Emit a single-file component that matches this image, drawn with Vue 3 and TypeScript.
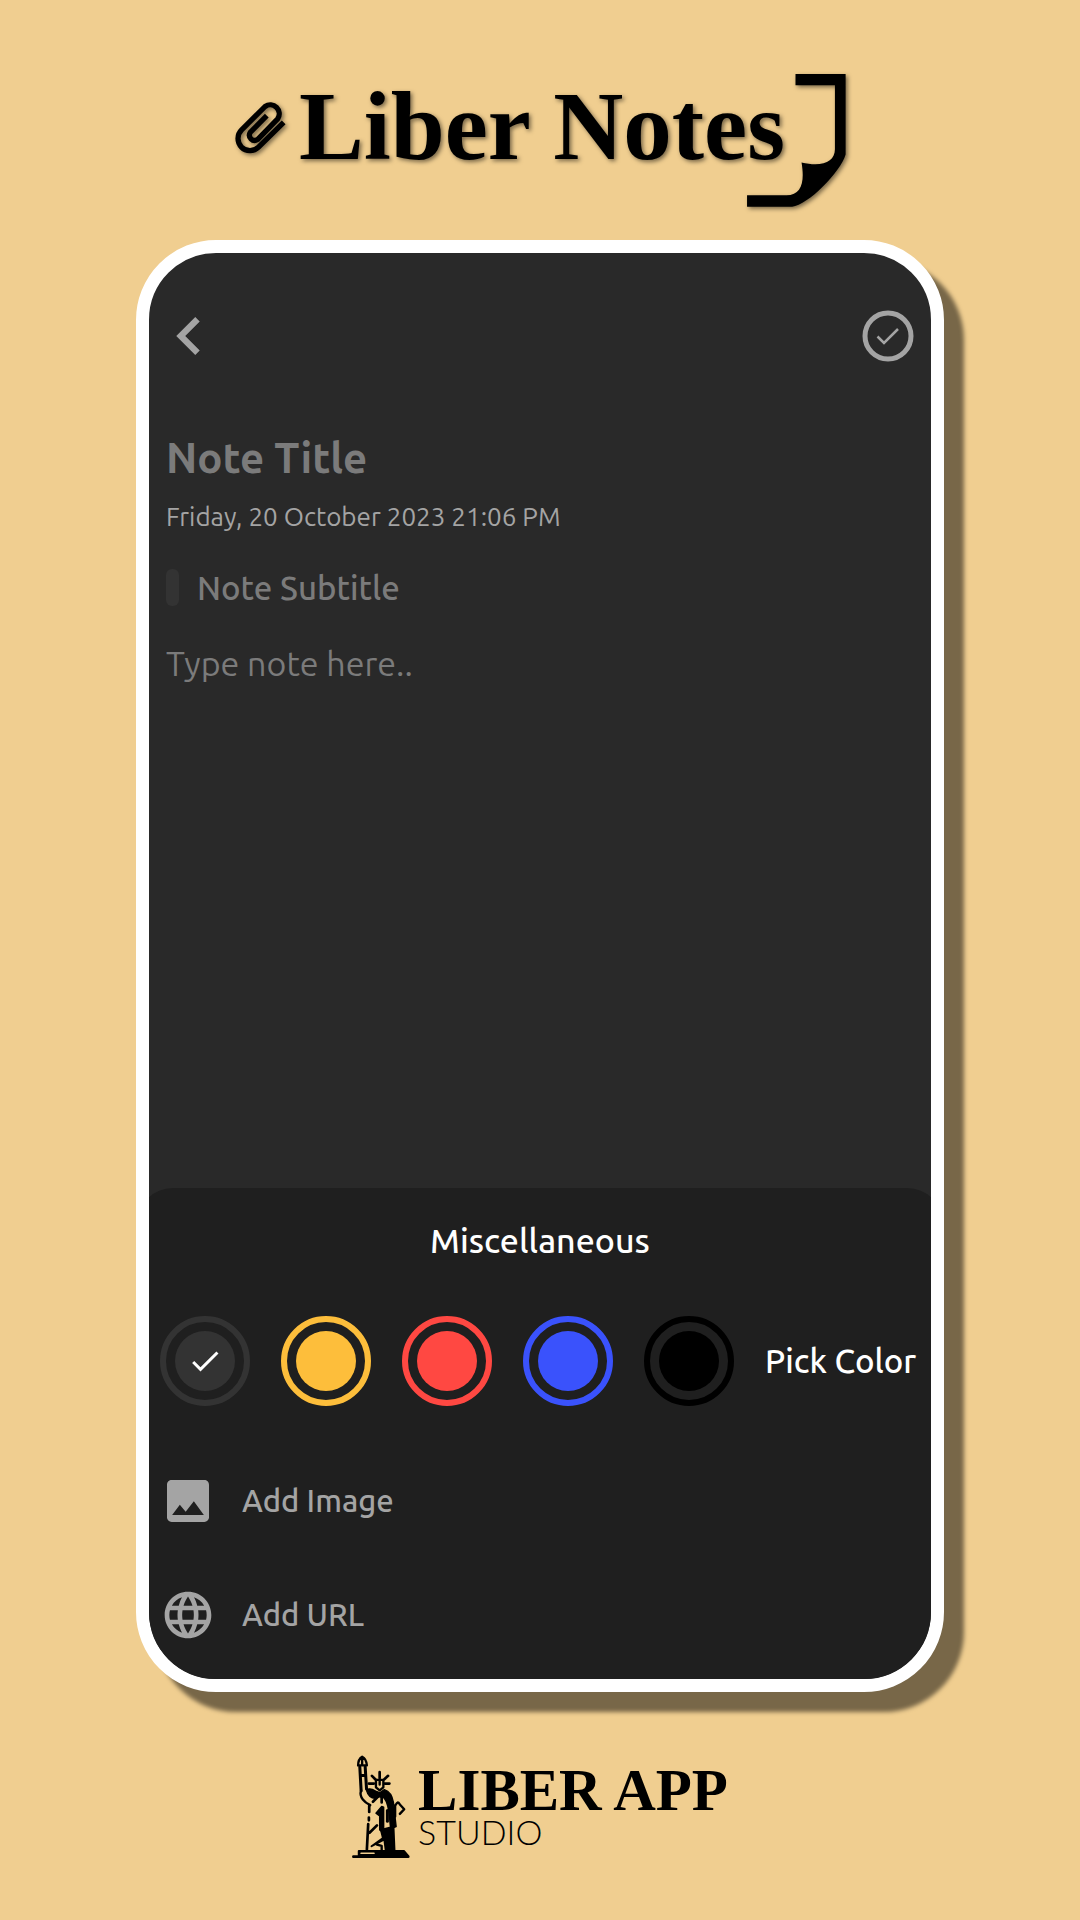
<script setup lang="ts">
import { ref } from 'vue'

interface Swatch {
  name: string
  color: string
}

const swatches: Swatch[] = [
  { name: 'Charcoal', color: '#333333' },
  { name: 'Yellow', color: '#fdbe3b' },
  { name: 'Red', color: '#ff4842' },
  { name: 'Blue', color: '#3a52fc' },
  { name: 'Black', color: '#000000' },
]

const selected = ref('Charcoal')
const title = ref('')
const subtitle = ref('')
const body = ref('')
</script>

<template>
  <div class="page">
    <header class="brand">
      <svg class="clip" viewBox="70 112 160 174" fill="none" stroke="#000" stroke-width="16" aria-hidden="true">
        <path d="M220 185 144 260A36 36 0 0 1 93 208L164 137A27 27 0 0 1 202 174L141 237A16 16 0 0 1 119 215L169 165" />
      </svg>
      <h1>Liber Notes</h1>
      <svg class="page-corner" viewBox="620 43 296 398" aria-hidden="true">
        <path d="M765 43H915V284C900 336 802 436 755 440H620V406H738C784 405 793 364 783 308C846 323 883 305 883 268V77H765Z" />
      </svg>
    </header>

    <main class="phone">
      <nav class="toolbar">
        <button type="button" aria-label="Back">
          <svg class="back" viewBox="8 6 7.41 12" fill="#a4a4a4"><path d="M15.41 7.41 14 6l-6 6 6 6 1.41-1.41L10.83 12z" /></svg>
        </button>
        <button type="button" aria-label="Save note">
          <svg class="save" viewBox="0 0 52 52" fill="none" stroke="#a4a4a4">
            <circle cx="26" cy="26" r="23" stroke-width="5" />
            <path d="m15.500 26.500 6.500 6.500 14-14" stroke-width="2.500" />
          </svg>
        </button>
      </nav>

      <section class="editor">
        <input v-model="title" class="title" type="text" placeholder="Note Title" aria-label="Note title" />
        <time class="date" datetime="2023-10-20T21:06">Friday, 20 October 2023 21:06 PM</time>
        <div class="subtitle-row">
          <span class="marker"></span>
          <input v-model="subtitle" class="subtitle medium" type="text" placeholder="Note Subtitle" aria-label="Note subtitle" />
        </div>
        <textarea v-model="body" class="body" placeholder="Type note here.." aria-label="Note text"></textarea>
      </section>

      <section class="sheet">
        <h2 class="medium">Miscellaneous</h2>
        <div class="colors">
          <label v-for="s in swatches" :key="s.name" class="swatch" :style="{ color: s.color }">
            <input v-model="selected" type="radio" name="color" :value="s.name" :aria-label="s.name" />
            <svg v-if="selected === s.name" class="tick" viewBox="0 0 24 24" fill="#fff">
              <path d="M9 16.170 4.830 12l-1.420 1.410L9 19 21 7l-1.410-1.410z" />
            </svg>
          </label>
          <button type="button" class="pick medium">Pick Color</button>
        </div>
        <button type="button" class="action medium">
          <svg viewBox="0 0 24 24" fill="#a4a4a4" aria-hidden="true">
            <path d="M21 19V5c0-1.100-.900-2-2-2H5c-1.100 0-2 .900-2 2v14c0 1.100.900 2 2 2h14c1.100 0 2-.900 2-2zM5.200 18l3.300-4.400 2.500 3 3.500-4.500L18.800 18z" />
          </svg>
          <span>Add Image</span>
        </button>
        <button type="button" class="action medium">
          <svg viewBox="0 0 24 24" fill="#a4a4a4" aria-hidden="true">
            <path d="M11.990 2C6.470 2 2 6.480 2 12s4.470 10 9.990 10C17.520 22 22 17.520 22 12S17.520 2 11.990 2zm6.930 6h-2.950c-.320-1.250-.780-2.450-1.380-3.560 1.840.630 3.370 1.910 4.330 3.560zM12 4.040c.830 1.200 1.480 2.530 1.910 3.960h-3.820c.430-1.430 1.080-2.760 1.910-3.960zM4.260 14C4.100 13.360 4 12.690 4 12s.100-1.360.260-2h3.380c-.080.660-.140 1.320-.140 2 0 .680.060 1.340.140 2H4.260zm.820 2h2.950c.320 1.250.780 2.450 1.380 3.560-1.840-.630-3.370-1.900-4.330-3.560zm2.950-8H5.080c.960-1.660 2.490-2.930 4.330-3.560C8.810 5.550 8.350 6.750 8.030 8zM12 19.960c-.830-1.200-1.480-2.530-1.910-3.960h3.820c-.430 1.430-1.080 2.760-1.910 3.960zM14.340 14H9.660c-.090-.660-.160-1.320-.160-2 0-.680.070-1.350.160-2h4.680c.090.650.160 1.320.160 2 0 .680-.070 1.340-.160 2zm.250 5.560c.600-1.110 1.060-2.310 1.380-3.560h2.950c-.960 1.650-2.490 2.930-4.330 3.560zM16.360 14c.080-.660.140-1.320.140-2 0-.680-.060-1.340-.140-2h3.380c.160.640.260 1.310.260 2s-.100 1.360-.260 2h-3.380z" />
          </svg>
          <span>Add URL</span>
        </button>
      </section>
    </main>

    <footer class="studio">
      <svg class="statue" viewBox="64 45 172 309" fill="none" stroke="#000" stroke-width="7" stroke-linecap="round" stroke-linejoin="round" aria-hidden="true">
        <path d="M82 76c0-14 5-22 12-26 8 4 13 12 14 26zM94 54v18" />
        <path d="M87 80l4 72M103 80l4 66M93 106h9" stroke-width="9" />
        <path d="M91 150c-3 8-2 18 5 27 6 8 14 13 22 17" />
        <path d="M146 96v18M123 107l10 10M171 107l-11 10M114 130h15M175 130h-14" stroke-width="8" />
        <path d="M135 119h22v22l-11 9-11-9zM146 119v14" />
        <path d="M106 148c12-6 20-1 28 4l12 5 14-9c16 5 24 20 27 38l8 72-16 6c-6-30 0-66-20-92l-14-3-12 5c-12 0-22-8-27-26z" fill="#000" stroke-width="4" />
        <path d="M126 184l16-16M152 160v26M115 196v18M114 231v8M112 250l-4 76M116 276l22-22" stroke-width="8" />
        <path d="M152 198l-17 20 11 8v42l12 8V200z" fill="#000" stroke-width="4" />
        <path d="M169 210v32" stroke-width="9" />
        <path d="M193 194c6-10 8-10 13-2l13 14-13 14M192 194v34" />
        <path d="M150 268l37-10 3 70h-26l-4-32-38 20 34-24z" fill="#000" stroke-width="6" />
        <path d="M138 311l14 4v12" />
        <path d="M84 330h134l12 14H84z" fill="#000" stroke-width="6" />
        <path d="M68 347h163" stroke-width="8" />
        <path d="M91 337h38" stroke="#f0ce90" stroke-width="5" />
      </svg>
      <p class="names">
        <strong>LIBER APP</strong>
        <span>STUDIO</span>
      </p>
    </footer>
  </div>
</template>

<style>
body {
  margin: 0;
  background: #f0ce90;
}
</style>

<style scoped>
* {
  box-sizing: border-box;
}

.page {
  padding: 74px 136px 60px;
  background: #f0ce90;
  color: #000;
  font-family: Ubuntu, "Noto Sans", sans-serif;
}

button,
input,
textarea {
  margin: 0;
  padding: 0;
  border: 0;
  outline: 0;
  background: none;
  color: inherit;
  font-family: inherit;
}

button {
  cursor: pointer;
}

svg {
  display: block;
  flex: none;
}

.medium {
  font-weight: 500;
}

.brand {
  display: flex;
  justify-content: center;
  height: 134px;
  margin-bottom: 32px;
  filter: drop-shadow(2px 2px 2px rgba(0, 0, 0, 0.5));
}

.clip {
  width: 53px;
  height: 58px;
  margin: 24px 12px 0 0;
}

.brand h1 {
  margin: 0;
  font: bold 97px/106px "Liberation Serif", serif;
  white-space: nowrap;
}

.page-corner {
  width: 99px;
  height: 133px;
  margin-left: -38px;
}

.phone {
  overflow: hidden;
  border: 13px solid #fff;
  border-radius: 80px;
  background: #292929;
  box-shadow: 20px 20px 4px rgba(0, 0, 0, 0.5);
}

.toolbar {
  display: flex;
  align-items: center;
  justify-content: space-between;
  padding: 57px 17px 0 27px;
}

.back {
  width: 24px;
  height: 38px;
}

.save {
  width: 52px;
  height: 52px;
}

.editor {
  display: flex;
  flex-direction: column;
  padding: 65px 17px 0;
  color: #a4a4a4;
}

.editor ::placeholder {
  color: #7b7b7b;
  opacity: 1;
}

.title {
  height: 60px;
  font-size: 42px;
  font-weight: 700;
}

.date {
  margin-top: 12px;
  font-size: 26px;
  line-height: 36px;
}

.subtitle-row {
  display: flex;
  align-items: center;
  gap: 18px;
  margin-top: 28px;
}

.marker {
  width: 13px;
  height: 37px;
  border-radius: 6px;
  background: #333;
}

.subtitle {
  flex: 1;
  min-width: 0;
  height: 48px;
  font-size: 33px;
}

.body {
  height: 549px;
  margin-top: 28px;
  font-size: 34px;
  line-height: 48px;
  resize: none;
}

.sheet {
  margin: 0 -12px;
  padding: 28px 23px 36px;
  border-radius: 36px 36px 0 0;
  background: #1f1f1f;
  color: #fff;
}

.sheet h2 {
  margin: 0;
  font-size: 34px;
  line-height: 48px;
  text-align: center;
}

.colors {
  display: flex;
  align-items: center;
  gap: 31px;
  margin-top: 52px;
}

.swatch {
  position: relative;
  flex: none;
  width: 90px;
  height: 90px;
}

.swatch input {
  display: block;
  width: 90px;
  height: 90px;
  padding: 9px;
  border: 6px solid currentColor;
  border-radius: 50%;
  background: currentColor content-box;
  appearance: none;
}

.tick {
  position: absolute;
  inset: 27px;
  width: 36px;
  height: 36px;
}

.pick {
  font-size: 33px;
  line-height: 48px;
  white-space: nowrap;
}

.action {
  display: flex;
  align-items: center;
  gap: 26px;
  margin-top: 58px;
  color: #a4a4a4;
  font-size: 31px;
  line-height: 48px;
}

.colors + .action {
  margin-top: 67px;
}

.action svg {
  width: 56px;
  height: 56px;
}

.studio {
  display: flex;
  justify-content: center;
  gap: 8px;
  margin-top: 63px;
}

.statue {
  width: 58px;
  height: 104px;
}

.names {
  display: flex;
  flex-direction: column;
  margin: 0;
  padding-top: 5px;
}

.names strong {
  font: bold 59px/60px "Liberation Serif", serif;
}

.names span {
  font: 300 34px/24px Lato, sans-serif;
}
</style>
